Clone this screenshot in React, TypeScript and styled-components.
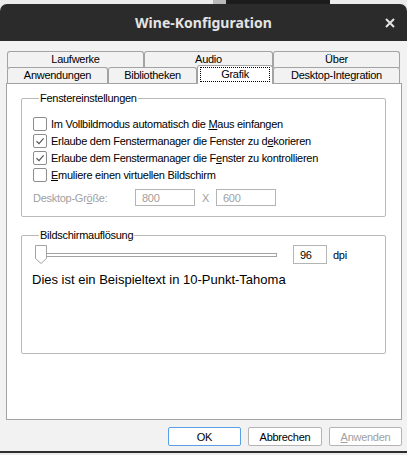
import React from 'react';
import styled, { createGlobalStyle } from 'styled-components';

const GlobalStyle = createGlobalStyle`
  html, body {
    margin: 0;
    padding: 0;
    background: #ececec;
  }
  body {
    font-family: "Liberation Sans", Arial, sans-serif;
    font-size: 11px;
    letter-spacing: -0.27px;
    color: #000;
  }
`;

const Screen = styled.div`
  width: 407px;
  height: 455px;
  display: flex;
  flex-direction: column;
  overflow: hidden;
`;

const BehindStrip = styled.div`
  height: 4px;
  display: flex;
`;

const BehindPiece = styled.div<{ $w: number; $c: string }>`
  width: ${({ $w }) => $w}px;
  background: ${({ $c }) => $c};
`;

const TitleBar = styled.div`
  height: 37px;
  background: #2b2b2b;
  border-radius: 7px 7px 0 0;
  display: flex;
  align-items: center;
  justify-content: center;
  position: relative;
  color: #e4e4e4;
  font-family: "Noto Sans", "DejaVu Sans", sans-serif;
  font-weight: bold;
  font-size: 14px;
  letter-spacing: 0;
`;

const CloseButton = styled.div`
  position: absolute;
  right: 12px;
  top: 14px;
  width: 10px;
  height: 10px;
  display: flex;
`;

const Body = styled.div`
  height: 412px;
  background: #f2f2f2;
  border-bottom: 2px solid #2e2e2e;
  padding: 10px 5px 0 6px;
  box-sizing: border-box;
  display: flex;
  flex-direction: column;
`;

const TabRow = styled.div<{ $front?: boolean }>`
  display: flex;
  align-items: flex-end;
  margin: ${({ $front }) => ($front ? '-3px 2px -1px 1px' : '0 2px 0 1px')};
  height: ${({ $front }) => ($front ? 19 : 17)}px;
`;

const Tab = styled.div<{ $w: number; $selected?: boolean; $back?: boolean }>`
  width: ${({ $w }) => $w}px;
  height: ${({ $selected }) => ($selected ? 19 : 17)}px;
  box-sizing: border-box;
  border: 1px solid #a3a3a3;
  border-bottom: none;
  border-radius: 3px 3px 0 0;
  background: ${({ $selected }) => ($selected ? '#fff' : '#f2f2f2')};
  display: flex;
  align-items: ${({ $selected }) => ($selected ? 'stretch' : 'center')};
  justify-content: center;
  padding: ${({ $selected, $back }) => ($selected ? '1px 2px 2px' : $back ? '0 0 2px' : '0 0 3px')};
  position: ${({ $selected }) => ($selected ? 'relative' : 'static')};
  z-index: ${({ $selected }) => ($selected ? 1 : 'auto')};
`;

const FocusLabel = styled.span`
  flex: 1;
  outline: 1px dotted #000;
  outline-offset: -1px;
  display: flex;
  align-items: center;
  justify-content: center;
  padding-bottom: 2px;
`;

const Panel = styled.div`
  height: 337px;
  box-sizing: border-box;
  background: #fff;
  border: 1px solid #a3a3a3;
  padding: 8px 15px 0 14px;
`;

const Group = styled.fieldset<{ $gap?: number; $bottom: number }>`
  margin: ${({ $gap }) => $gap ?? 0}px 0 0 0;
  border: 1px solid #b9b9b9;
  border-radius: 2px;
  padding: 0 11px ${({ $bottom }) => $bottom}px 11px;
  min-width: 0;
`;

const Legend = styled.legend`
  padding: 0 1px;
  margin-left: 6px;
  line-height: 13px;
`;

const CheckList = styled.div`
  padding-top: 10px;
  display: flex;
  flex-direction: column;
`;

const CheckRow = styled.label`
  height: 17px;
  display: flex;
  align-items: center;
  gap: 4px;
`;

const Box = styled.span`
  width: 12px;
  height: 12px;
  border: 1px solid #8d8d8d;
  border-radius: 2px;
  background: #fff;
  display: flex;
  align-items: center;
  justify-content: center;
`;

const SizeRow = styled.div`
  margin-top: 6px;
  height: 17px;
  display: flex;
  align-items: center;
  color: #a0a0a0;
`;

const SizeLabel = styled.span`
  width: 102px;
`;

const Field = styled.div<{ $w: number; $h: number; $disabled?: boolean }>`
  width: ${({ $w }) => $w}px;
  height: ${({ $h }) => $h}px;
  box-sizing: border-box;
  border: 1px solid #b4b4b4;
  background: #fff;
  padding-left: 6px;
  display: flex;
  align-items: center;
  color: ${({ $disabled }) => ($disabled ? '#a0a0a0' : '#000')};
`;

const Times = styled.span`
  width: 21px;
  text-align: center;
`;

const SliderRow = styled.div`
  margin: 2px 0 0 2px;
  height: 21px;
  display: flex;
  align-items: center;
`;

const Track = styled.div`
  width: 231px;
  height: 4px;
  box-sizing: border-box;
  border: 1px solid #a3a3a3;
  background: #fff;
  margin-left: -1px;
  margin-right: 16px;
`;

const Unit = styled.span`
  margin-left: 6px;
`;

const Sample = styled.div`
  margin: 7px 0 0 -1px;
  font-size: 13px;
  line-height: 16px;
  letter-spacing: 0;
`;

const ButtonBar = styled.div`
  margin-top: 7px;
  display: flex;
  justify-content: flex-end;
  gap: 7px;
`;

const Button = styled.div<{ $w: number; $default?: boolean; $disabled?: boolean }>`
  width: ${({ $w }) => $w}px;
  height: 19px;
  box-sizing: border-box;
  border: 1px solid ${({ $default }) => ($default ? '#5a9ee6' : '#b4b4b4')};
  border-radius: 2px;
  background: #fff;
  display: flex;
  align-items: center;
  justify-content: center;
  color: ${({ $disabled }) => ($disabled ? '#a0a0a0' : '#000')};
`;

const Check = () => (
  <svg width="10" height="10" viewBox="0 0 10 10">
    <path d="M1.5 5.2 L4 7.6 L8.6 2.4" fill="none" stroke="#555" strokeWidth="1.2" />
  </svg>
);

const Thumb = () => (
  <svg width="12" height="19" viewBox="0 0 12 19">
    <path d="M0.5 0.5 H11.5 V13.5 L6 18.5 L0.5 13.5 Z" fill="#fff" stroke="#a3a3a3" />
  </svg>
);

const options = [
  { checked: false, text: <>Im Vollbildmodus automatisch die <u>M</u>aus einfangen</> },
  { checked: true, text: <>Erlaube dem Fenstermanager die Fenster zu d<u>e</u>korieren</> },
  { checked: true, text: <>Erlaube dem Fenstermanager die F<u>e</u>nster zu kontrollieren</> },
  { checked: false, text: <><u>E</u>muliere einen virtuellen Bildschirm</> },
];

export default function App() {
  return (
    <Screen>
      <GlobalStyle />
      <BehindStrip>
        <BehindPiece $w={213} $c="#ececec" />
        <BehindPiece $w={13} $c="#b9b9b9" />
        <BehindPiece $w={104} $c="#1c1c1c" />
        <BehindPiece $w={77} $c="#ececec" />
      </BehindStrip>
      <TitleBar>
        Wine-Konfiguration
        <CloseButton>
          <svg width="10" height="10" viewBox="0 0 10 10">
            <path d="M1 1 L9 9 M9 1 L1 9" stroke="#e4e4e4" strokeWidth="2" />
          </svg>
        </CloseButton>
      </TitleBar>
      <Body>
        <TabRow>
          <Tab $w={137} $back>Laufwerke</Tab>
          <Tab $w={129} $back>Audio</Tab>
          <Tab $w={127} $back>Über</Tab>
        </TabRow>
        <TabRow $front>
          <Tab $w={101}>Anwendungen</Tab>
          <Tab $w={89}>Bibliotheken</Tab>
          <Tab $w={76} $selected>
            <FocusLabel>Grafik</FocusLabel>
          </Tab>
          <Tab $w={127}>Desktop-Integration</Tab>
        </TabRow>
        <Panel>
          <Group $bottom={10}>
            <Legend>Fenstereinstellungen</Legend>
            <CheckList>
              {options.map((o, i) => (
                <CheckRow key={i}>
                  <Box>{o.checked && <Check />}</Box>
                  <span>{o.text}</span>
                </CheckRow>
              ))}
            </CheckList>
            <SizeRow>
              <SizeLabel>
                Desktop-Gr<u>ö</u>ße:
              </SizeLabel>
              <Field $w={60} $h={17} $disabled>800</Field>
              <Times>X</Times>
              <Field $w={60} $h={17} $disabled>600</Field>
            </SizeRow>
          </Group>
          <Group $gap={12} $bottom={65}>
            <Legend>Bildschirmauflösung</Legend>
            <SliderRow>
              <Thumb />
              <Track />
              <Field $w={34} $h={19}>96</Field>
              <Unit>dpi</Unit>
            </SliderRow>
            <Sample>Dies ist ein Beispieltext in 10-Punkt-Tahoma</Sample>
          </Group>
        </Panel>
        <ButtonBar>
          <Button $w={73} $default>OK</Button>
          <Button $w={74}>Abbrechen</Button>
          <Button $w={73} $disabled>
            <span>
              <u>A</u>nwenden
            </span>
          </Button>
        </ButtonBar>
      </Body>
    </Screen>
  );
}
